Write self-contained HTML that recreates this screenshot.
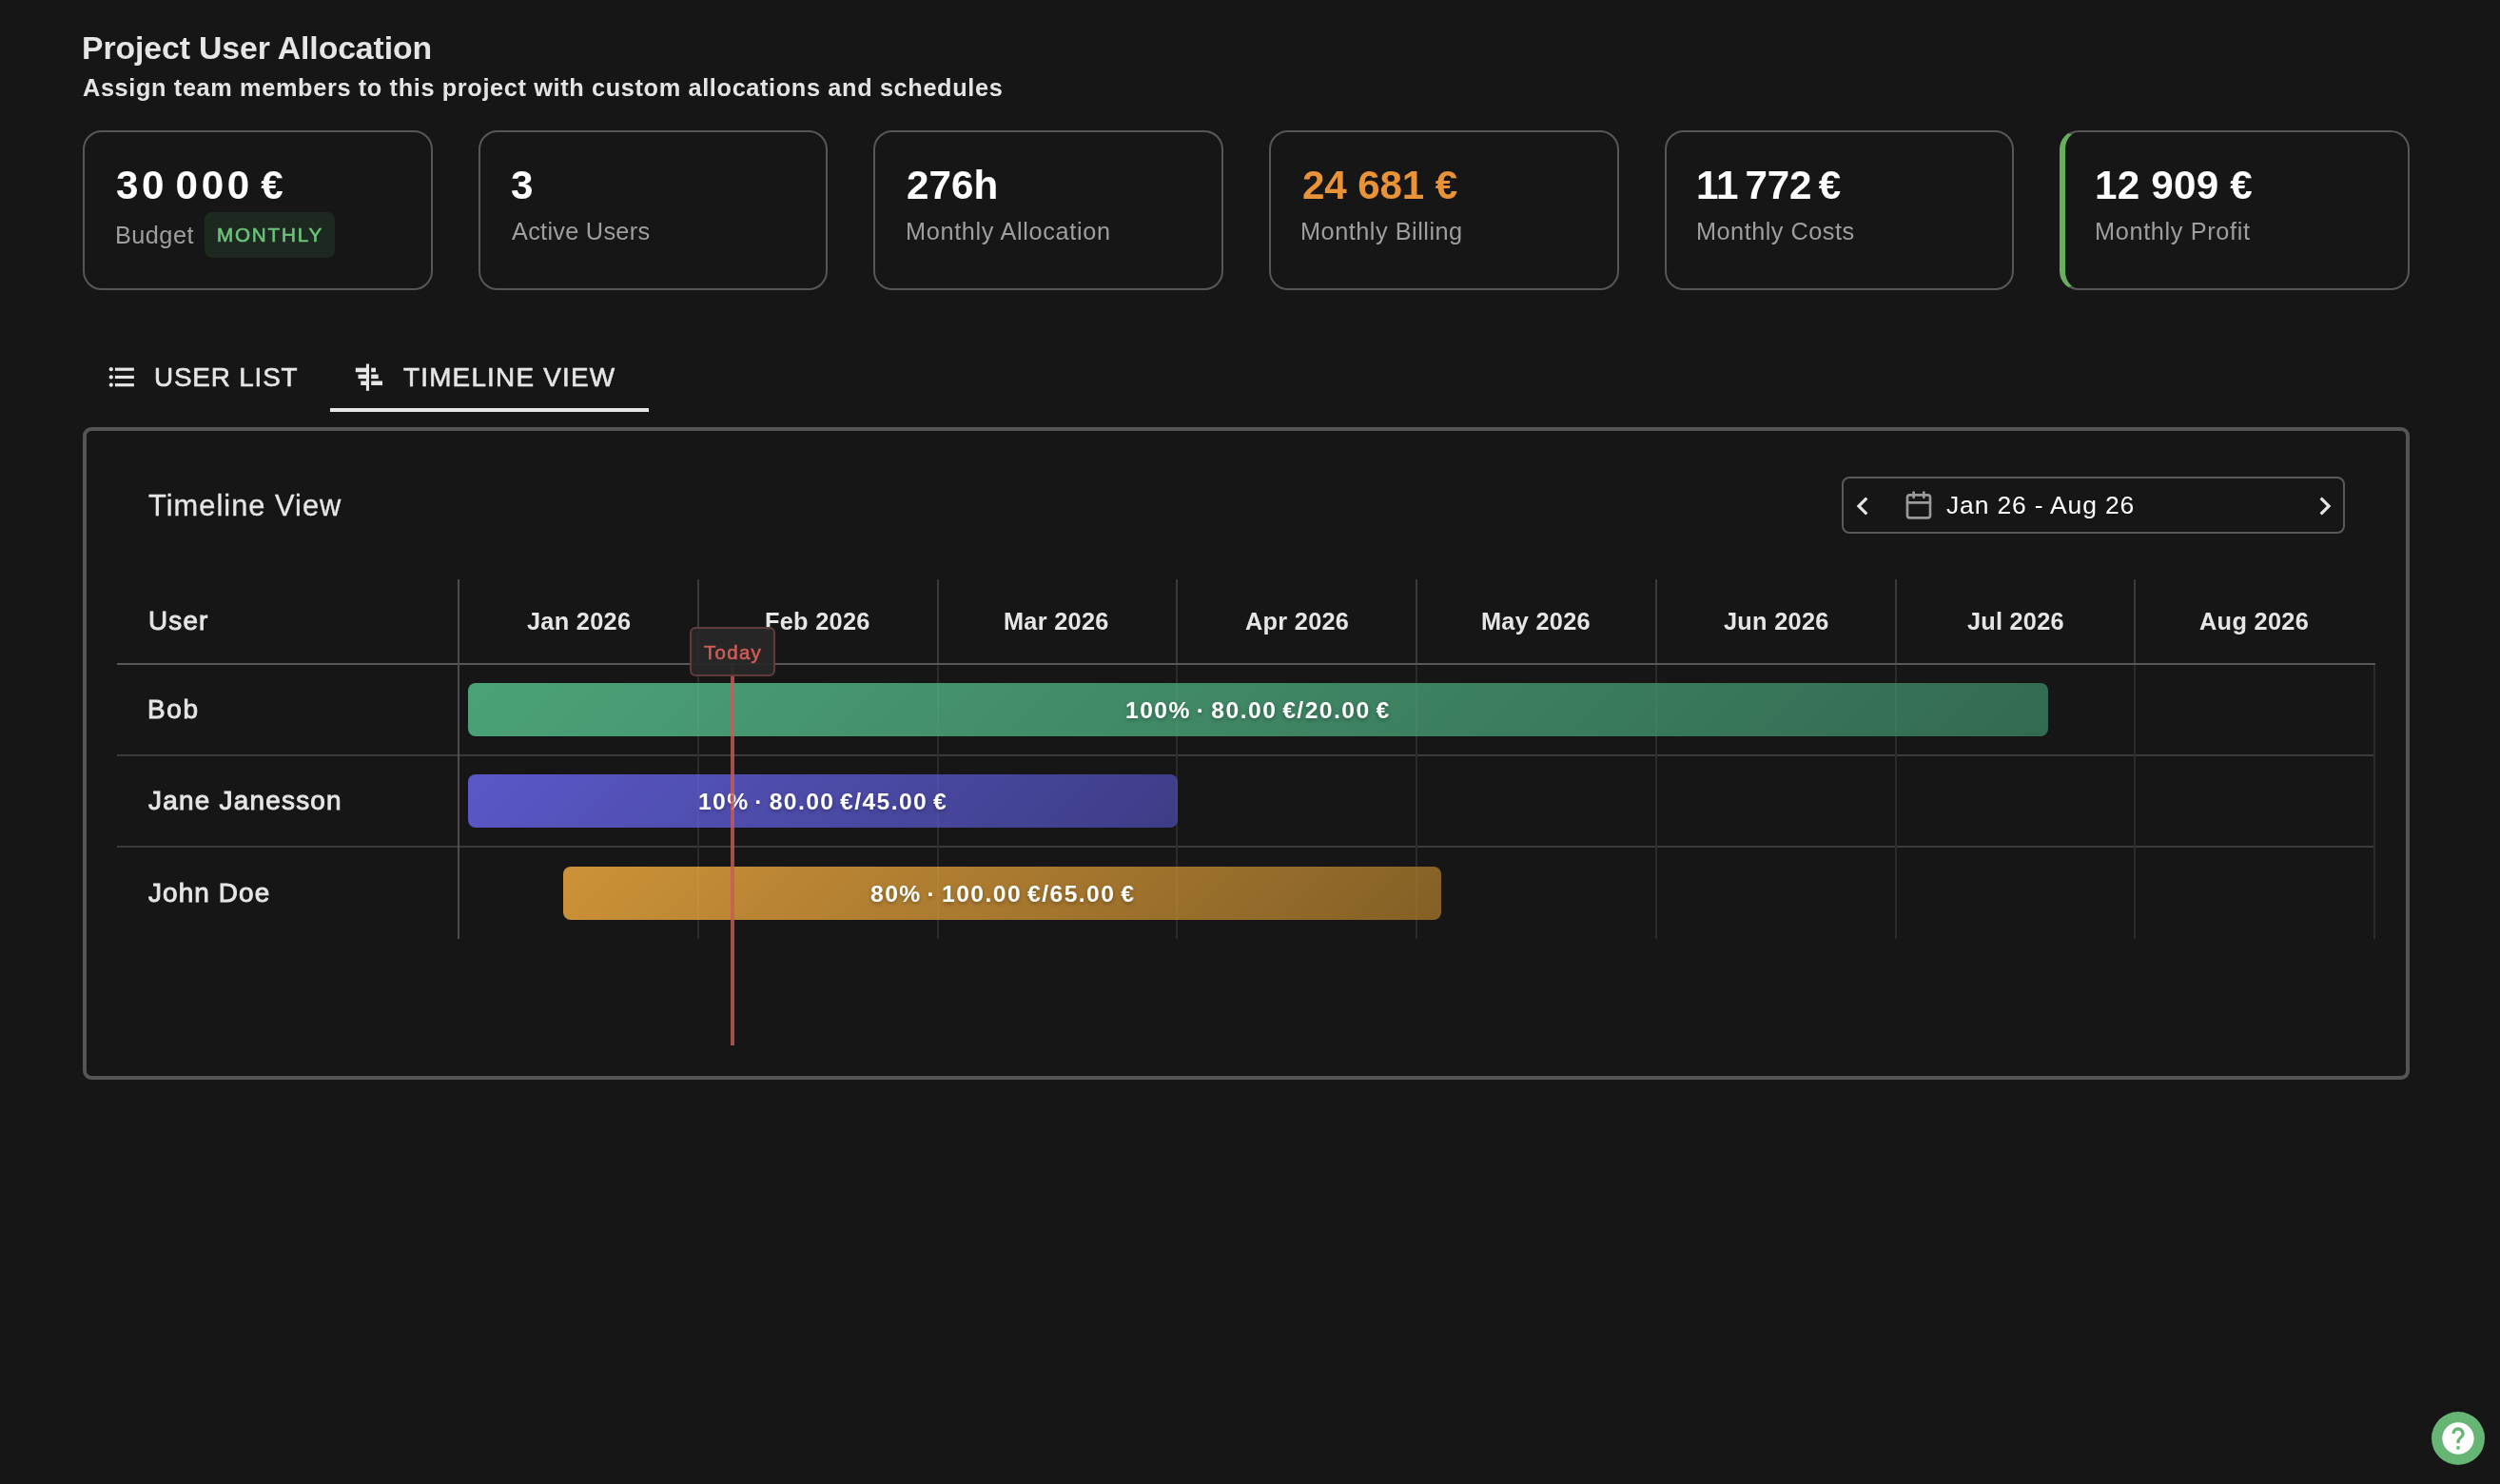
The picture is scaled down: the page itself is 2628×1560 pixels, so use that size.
<!DOCTYPE html>
<html lang="en">
<head>
<meta charset="utf-8">
<title>Project User Allocation</title>
<style>
*{box-sizing:border-box;margin:0;padding:0}
html,body{width:2628px;height:1560px;overflow:hidden;background:#161616}
body{position:relative;font-family:"Liberation Sans",sans-serif;color:#e6e6e6}
.t{position:absolute;white-space:pre;display:block;will-change:transform}
.abs{position:absolute}
/* stat cards */
.card{position:absolute;top:137px;height:168px;width:367.67px;border:2px solid #575757;border-radius:20px;background:#161616}
.card.profit{border-left:6px solid #68ae5e}
.chipbg{position:absolute;left:215px;top:223px;width:137px;height:48px;border-radius:8px;background:#1d2820}
/* tabs */
.tabline{position:absolute;left:347px;top:429px;width:335px;height:4px;background:#e6e6e6}
/* panel */
.panel{position:absolute;left:87px;top:449px;width:2446px;height:686px;border:4px solid #555;border-radius:9px;background:#161616}
.datebox{position:absolute;left:1936px;top:501px;width:529px;height:60px;border:2px solid #5a5a5a;border-radius:8px}
/* table lines */
.hl{position:absolute;left:123px;width:2374px;height:2px}
.vl{position:absolute;width:2px}
.bar{position:absolute;height:56px;border-radius:8px}
.todayline{position:absolute;left:768px;top:699px;width:4px;height:400px;background:rgba(200,91,87,.8)}
.todaybox{position:absolute;left:725px;top:659px;width:90px;height:52px;border:2px solid #623c3c;border-radius:6px;background:rgba(40,40,40,.93)}
.fab{position:absolute;left:2556px;top:1484px;width:56px;height:56px;border-radius:50%;background:#66b574}
#title{left:86.40px;top:27.40px;font-size:33.76px;line-height:47px;font-weight:700;color:#e6e6e6;letter-spacing:-0.091px;}
#sub{left:87.40px;top:74.73px;font-size:25.32px;line-height:35px;font-weight:700;color:#e4e4e4;letter-spacing:0.631px;}
#v1{left:122.00px;top:165.18px;font-size:42.2px;line-height:59px;font-weight:700;color:#ffffff;letter-spacing:3.643px;word-spacing:-7px;}
#v2{left:537.40px;top:165.18px;font-size:42.2px;line-height:59px;font-weight:700;color:#ffffff;letter-spacing:0.000px;}
#v3{left:953.40px;top:165.18px;font-size:42.2px;line-height:59px;font-weight:700;color:#ffffff;letter-spacing:0.033px;}
#v4{left:1369.00px;top:165.18px;font-size:42.2px;line-height:59px;font-weight:700;color:#ea9236;letter-spacing:-0.143px;}
#v5{left:1782.70px;top:165.18px;font-size:42.2px;line-height:59px;font-weight:700;color:#ffffff;letter-spacing:-0.243px;word-spacing:-4px;}
#v6{left:2202.40px;top:165.18px;font-size:42.2px;line-height:59px;font-weight:700;color:#ffffff;letter-spacing:0.229px;}
#l1{left:121.00px;top:229.83px;font-size:25.32px;line-height:35px;font-weight:400;color:#9e9e9e;letter-spacing:0.440px;}
#l2{left:537.60px;top:225.73px;font-size:25.32px;line-height:35px;font-weight:400;color:#9e9e9e;letter-spacing:0.273px;}
#l3{left:951.60px;top:225.73px;font-size:25.32px;line-height:35px;font-weight:400;color:#9e9e9e;letter-spacing:0.647px;}
#l4{left:1367.00px;top:225.73px;font-size:25.32px;line-height:35px;font-weight:400;color:#9e9e9e;letter-spacing:0.500px;}
#l5{left:1782.70px;top:225.73px;font-size:25.32px;line-height:35px;font-weight:400;color:#9e9e9e;letter-spacing:0.475px;}
#l6{left:2202.00px;top:225.73px;font-size:25.32px;line-height:35px;font-weight:400;color:#9e9e9e;letter-spacing:0.631px;}
#chip{left:227.70px;top:231.83px;font-size:20.68px;line-height:29px;font-weight:400;color:#6bc47a;letter-spacing:1.783px;-webkit-text-stroke:0.6px #6bc47a;}
#tab1{left:162.20px;top:377.25px;font-size:27.85px;line-height:39px;font-weight:400;color:#e6e6e6;letter-spacing:0.837px;-webkit-text-stroke:0.6px #e6e6e6;}
#tab2{left:424.00px;top:377.25px;font-size:27.85px;line-height:39px;font-weight:400;color:#e6e6e6;letter-spacing:1.225px;-webkit-text-stroke:0.6px #e6e6e6;}
#tv{left:156.10px;top:509.82px;font-size:30.81px;line-height:43px;font-weight:400;color:#e6e6e6;letter-spacing:1.025px;-webkit-text-stroke:0.3px #e6e6e6;}
#date{left:2046.10px;top:512.62px;font-size:26.48px;line-height:37px;font-weight:400;color:#ffffff;letter-spacing:0.843px;}
#user{left:155.60px;top:633.45px;font-size:27.85px;line-height:39px;font-weight:400;color:#e6e6e6;letter-spacing:1.200px;-webkit-text-stroke:0.9px #e6e6e6;}
#n1{left:154.90px;top:725.81px;font-size:27.96px;line-height:39px;font-weight:400;color:#e6e6e6;letter-spacing:1.700px;-webkit-text-stroke:0.9px #e6e6e6;}
#n2{left:156.20px;top:821.81px;font-size:27.96px;line-height:39px;font-weight:400;color:#e6e6e6;letter-spacing:1.217px;-webkit-text-stroke:0.9px #e6e6e6;}
#n3{left:156.20px;top:918.91px;font-size:27.96px;line-height:39px;font-weight:400;color:#e6e6e6;letter-spacing:1.086px;-webkit-text-stroke:0.9px #e6e6e6;}
#m0{left:553.88px;top:635.73px;font-size:25.32px;line-height:35px;font-weight:700;color:#e6e6e6;letter-spacing:0.286px;}
#m1{left:803.62px;top:635.73px;font-size:25.32px;line-height:35px;font-weight:700;color:#e6e6e6;letter-spacing:0.286px;}
#m2{left:1055.38px;top:635.73px;font-size:25.32px;line-height:35px;font-weight:700;color:#e6e6e6;letter-spacing:0.286px;}
#m3{left:1308.62px;top:635.73px;font-size:25.32px;line-height:35px;font-weight:700;color:#e6e6e6;letter-spacing:0.286px;}
#m4{left:1556.88px;top:635.73px;font-size:25.32px;line-height:35px;font-weight:700;color:#e6e6e6;letter-spacing:0.286px;}
#m5{left:1811.62px;top:635.73px;font-size:25.32px;line-height:35px;font-weight:700;color:#e6e6e6;letter-spacing:0.286px;}
#m6{left:2068.07px;top:635.73px;font-size:25.32px;line-height:35px;font-weight:700;color:#e6e6e6;letter-spacing:0.229px;}
#m7{left:2312.47px;top:635.73px;font-size:25.32px;line-height:35px;font-weight:700;color:#e6e6e6;letter-spacing:0.329px;}
#b1{left:1183.20px;top:728.94px;font-size:24.69px;line-height:35px;font-weight:700;color:#ffffff;letter-spacing:1.457px;word-spacing:-2.5px;text-shadow:0 2px 4px rgba(0,0,0,.3);}
#b2{left:733.75px;top:824.94px;font-size:24.69px;line-height:35px;font-weight:700;color:#ffffff;letter-spacing:1.385px;word-spacing:-2.5px;text-shadow:0 2px 4px rgba(0,0,0,.3);}
#b3{left:914.75px;top:921.94px;font-size:24.69px;line-height:35px;font-weight:700;color:#ffffff;letter-spacing:1.443px;word-spacing:-2.5px;text-shadow:0 2px 4px rgba(0,0,0,.3);}
#today{left:739.80px;top:670.81px;font-size:20.47px;line-height:29px;font-weight:400;color:#cf5c58;letter-spacing:1.300px;-webkit-text-stroke:0.6px #cf5c58;}
@media (max-width:1400px){html{zoom:.5}}
</style>
</head>
<body>

<h1 class="t" id="title">Project User Allocation</h1>
<p class="t" id="sub">Assign team members to this project with custom allocations and schedules</p>

<section>
  <div class="card" style="left:87px"></div>
  <div class="card" style="left:502.67px"></div>
  <div class="card" style="left:918.33px"></div>
  <div class="card" style="left:1334px"></div>
  <div class="card" style="left:1749.67px"></div>
  <div class="card profit" style="left:2165.33px"></div>
  <div class="chipbg"></div>
  <span class="t" id="v1">30 000 €</span><span class="t" id="l1">Budget</span><span class="t" id="chip">MONTHLY</span>
  <span class="t" id="v2">3</span><span class="t" id="l2">Active Users</span>
  <span class="t" id="v3">276h</span><span class="t" id="l3">Monthly Allocation</span>
  <span class="t" id="v4">24 681 €</span><span class="t" id="l4">Monthly Billing</span>
  <span class="t" id="v5">11 772 €</span><span class="t" id="l5">Monthly Costs</span>
  <span class="t" id="v6">12 909 €</span><span class="t" id="l6">Monthly Profit</span>
</section>

<nav>
  <svg class="abs" style="left:100px;top:370px" width="60" height="50" viewBox="0 0 60 50" fill="#e6e6e6">
    <circle cx="16.8" cy="18.2" r="2.1"/><circle cx="16.8" cy="26.45" r="2.1"/><circle cx="16.8" cy="34.7" r="2.1"/>
    <rect x="20.9" y="16.6" width="20" height="3.2"/><rect x="20.9" y="24.85" width="20" height="3.2"/><rect x="20.9" y="33.1" width="20" height="3.2"/>
  </svg>
  <span class="t" id="tab1">USER LIST</span>
  <svg class="abs" style="left:360px;top:370px" width="60" height="50" viewBox="0 0 60 50" fill="#e6e6e6">
    <rect x="24.9" y="12.5" width="3.1" height="28.3"/>
    <rect x="13.8" y="16.7" width="12" height="4.5"/><rect x="16.5" y="23.6" width="9" height="4.5"/><rect x="19.2" y="30.5" width="6" height="4.5"/>
    <rect x="30.2" y="16.7" width="4.8" height="4.5"/><rect x="30.2" y="23.6" width="7.5" height="4.5"/><rect x="30.2" y="30.5" width="11.8" height="4.5"/>
  </svg>
  <span class="t" id="tab2">TIMELINE VIEW</span>
  <div class="tabline"></div>
</nav>

<main class="panel"></main>
<h2 class="t" id="tv">Timeline View</h2>

<div class="datebox"></div>
<svg class="abs" style="left:1938.8px;top:512.9px" width="38" height="38" viewBox="0 0 24 24" fill="#e6e6e6"><path d="M15.41,16.58L10.83,12L15.41,7.41L14,6L8,12L14,18L15.41,16.58Z"/></svg>
<svg class="abs" style="left:2000.6px;top:515px" width="32" height="32" viewBox="0 0 24 24" fill="none" stroke="#9a9a9a" stroke-width="2" stroke-linecap="round" stroke-linejoin="round"><rect x="3" y="4" width="18" height="18" rx="2"/><path d="M16 2v4M8 2v4M3 10h18"/></svg>
<span class="t" id="date">Jan 26 - Aug 26</span>
<svg class="abs" style="left:2424.6px;top:512.9px" width="38" height="38" viewBox="0 0 24 24" fill="#e6e6e6"><path d="M8.59,16.58L13.17,12L8.59,7.41L10,6L16,12L10,18L8.59,16.58Z"/></svg>

<div class="hl" style="top:697px;background:#585858"></div>
<div class="hl" style="top:793px;background:#3a3a3a"></div>
<div class="hl" style="top:889px;background:#3a3a3a"></div>
<div class="vl" style="left:481px;top:609px;height:378px;background:#4d4d4d"></div>
<div class="vl" style="left:733px;top:609px;height:88px;background:#3a3a3a"></div>
<div class="vl" style="left:985px;top:609px;height:88px;background:#3a3a3a"></div>
<div class="vl" style="left:1236px;top:609px;height:88px;background:#3a3a3a"></div>
<div class="vl" style="left:1488px;top:609px;height:88px;background:#3a3a3a"></div>
<div class="vl" style="left:1740px;top:609px;height:88px;background:#3a3a3a"></div>
<div class="vl" style="left:1992px;top:609px;height:88px;background:#3a3a3a"></div>
<div class="vl" style="left:2243px;top:609px;height:88px;background:#3a3a3a"></div>
<span class="t" id="user">User</span>
<span class="t" id="m0">Jan 2026</span>
<span class="t" id="m1">Feb 2026</span>
<span class="t" id="m2">Mar 2026</span>
<span class="t" id="m3">Apr 2026</span>
<span class="t" id="m4">May 2026</span>
<span class="t" id="m5">Jun 2026</span>
<span class="t" id="m6">Jul 2026</span>
<span class="t" id="m7">Aug 2026</span>
<span class="t" id="n1">Bob</span>
<span class="t" id="n2">Jane Janesson</span>
<span class="t" id="n3">John Doe</span>
<div class="vl" style="left:733px;top:699px;height:288px;background:#242424"></div>
<div class="vl" style="left:985px;top:699px;height:288px;background:#242424"></div>
<div class="vl" style="left:1236px;top:699px;height:288px;background:#242424"></div>
<div class="vl" style="left:1488px;top:699px;height:288px;background:#242424"></div>
<div class="vl" style="left:1740px;top:699px;height:288px;background:#242424"></div>
<div class="vl" style="left:1992px;top:699px;height:288px;background:#242424"></div>
<div class="vl" style="left:2243px;top:699px;height:288px;background:#242424"></div>
<div class="vl" style="left:2495px;top:699px;height:288px;background:#242424"></div>
<div class="bar" style="left:492px;top:718px;width:1661px;background:linear-gradient(135deg,#4ba277 0%,#336a52 100%)"></div>
<div class="bar" style="left:492px;top:814px;width:746px;background:linear-gradient(135deg,#5a58c8 0%,#3d3d86 100%)"></div>
<div class="bar" style="left:592px;top:911px;width:923px;background:linear-gradient(135deg,#cd9238 0%,#846026 100%)"></div>
<div class="vl" style="left:733px;top:699px;height:288px;background:rgba(255,255,255,.035)"></div>
<div class="vl" style="left:985px;top:699px;height:288px;background:rgba(255,255,255,.035)"></div>
<div class="vl" style="left:1236px;top:699px;height:288px;background:rgba(255,255,255,.035)"></div>
<div class="vl" style="left:1488px;top:699px;height:288px;background:rgba(255,255,255,.035)"></div>
<div class="vl" style="left:1740px;top:699px;height:288px;background:rgba(255,255,255,.035)"></div>
<div class="vl" style="left:1992px;top:699px;height:288px;background:rgba(255,255,255,.035)"></div>
<div class="vl" style="left:2243px;top:699px;height:288px;background:rgba(255,255,255,.035)"></div>
<div class="vl" style="left:2495px;top:699px;height:288px;background:rgba(255,255,255,.035)"></div>
<span class="t" id="b1">100% · 80.00 €/20.00 €</span>
<span class="t" id="b2">10% · 80.00 €/45.00 €</span>
<span class="t" id="b3">80% · 100.00 €/65.00 €</span>
<div class="todayline"></div>
<div class="todaybox"></div>
<span class="t" id="today">Today</span>

<div class="fab"></div>
<svg class="abs" style="left:2564px;top:1492px" width="40" height="40" viewBox="0 0 24 24" fill="#fff"><path d="M15.07,11.25L14.17,12.17C13.45,12.89 13,13.5 13,15H11V14.5C11,13.39 11.45,12.39 12.17,11.67L13.41,10.41C13.78,10.05 14,9.55 14,9C14,7.89 13.1,7 12,7A2,2 0 0,0 10,9H8A4,4 0 0,1 12,5A4,4 0 0,1 16,9C16,9.88 15.64,10.67 15.07,11.25M13,19H11V17H13M12,2A10,10 0 0,0 2,12A10,10 0 0,0 12,22A10,10 0 0,0 22,12C22,6.47 17.5,2 12,2Z"/></svg>
</body>
</html>
